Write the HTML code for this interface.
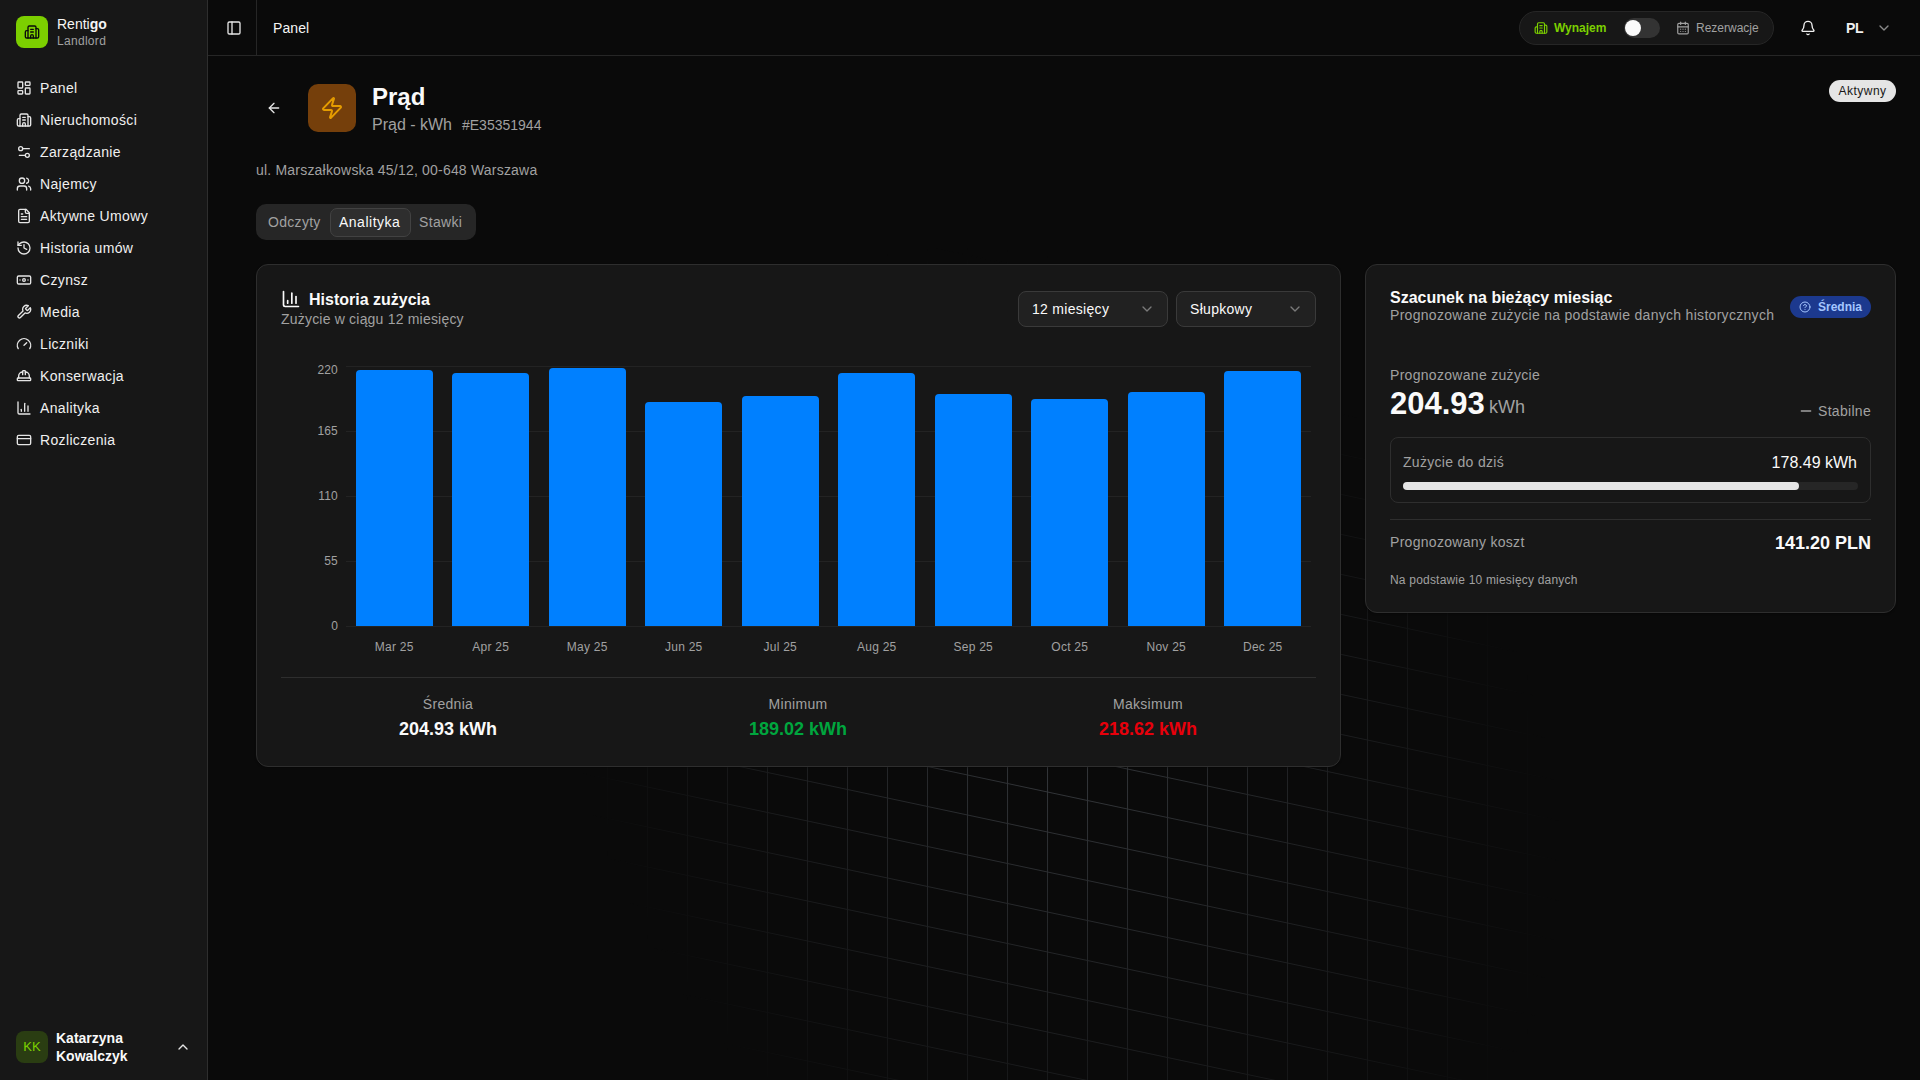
<!DOCTYPE html>
<html><head><meta charset="utf-8">
<style>
*{box-sizing:border-box;margin:0;padding:0}
html,body{width:1920px;height:1080px;overflow:hidden;background:#0a0a0a;font-family:"Liberation Sans",sans-serif;color:#fafafa}
.abs{position:absolute}
svg.i{position:absolute;fill:none;stroke:currentColor;stroke-width:2;stroke-linecap:round;stroke-linejoin:round}
.t{position:absolute;white-space:nowrap;line-height:1}
#sidebar{position:absolute;left:0;top:0;width:208px;height:1080px;background:#171717;border-right:1px solid #2e2e2e}
#header{position:absolute;left:208px;top:0;width:1712px;height:56px;border-bottom:1px solid #262626;background:#0a0a0a}
.nav{color:#f0f0f0;font-size:14px;letter-spacing:.35px}
.muted{color:#a1a1a1}
.card{position:absolute;background:#171717;border:1px solid #2e2e2e;border-radius:12px;box-shadow:0 1px 2px rgba(0,0,0,.3)}
</style></head><body>

<!-- grid background -->
<div id="grid" class="abs" style="left:208px;top:0;width:1712px;height:1080px;overflow:hidden">
<svg width="1712" height="2160" style="position:absolute;left:0;top:-324px;transform:skewY(12deg);-webkit-mask-image:radial-gradient(500px circle at center,#fff,transparent);mask-image:radial-gradient(500px circle at center,#fff,transparent)">
<defs><pattern id="gp" width="40" height="40" patternUnits="userSpaceOnUse" x="-1" y="-1"><path d="M.5 40V.5H40" fill="none" stroke="rgba(153,161,175,0.3)" stroke-width="1"/></pattern></defs>
<rect width="100%" height="100%" stroke-width="0" fill="url(#gp)"/>
</svg>
</div>

<div id="sidebar">
  <div class="abs" style="left:16px;top:16px;width:32px;height:32px;border-radius:8px;background:#7ccf00"></div>
  <svg class="i" style="left:24px;top:24px;color:#0a0a0a" width="16" height="16" viewBox="0 0 24 24"><path d="M10 12h4"/><path d="M10 8h4"/><path d="M14 21v-3a2 2 0 0 0-4 0v3"/><path d="M6 10H4a2 2 0 0 0-2 2v7a2 2 0 0 0 2 2h16a2 2 0 0 0 2-2V9a2 2 0 0 0-2-2h-2"/><path d="M6 21V5a2 2 0 0 1 2-2h8a2 2 0 0 1 2 2v16"/></svg>
  <div class="t" style="left:57px;top:17px;font-size:14px;color:#f5f5f5">Renti<b>go</b></div>
  <div class="t muted" style="left:57px;top:35px;font-size:12px;letter-spacing:.3px">Landlord</div>

    <svg class="i" style="left:16px;top:80px;color:#e5e5e5" width="16" height="16" viewBox="0 0 24 24"><rect width="7" height="9" x="3" y="3" rx="1"/><rect width="7" height="5" x="14" y="3" rx="1"/><rect width="7" height="9" x="14" y="12" rx="1"/><rect width="7" height="5" x="3" y="16" rx="1"/></svg>
  <div class="t nav" style="left:40px;top:81px">Panel</div>
  <svg class="i" style="left:16px;top:112px;color:#e5e5e5" width="16" height="16" viewBox="0 0 24 24"><path d="M10 12h4"/><path d="M10 8h4"/><path d="M14 21v-3a2 2 0 0 0-4 0v3"/><path d="M6 10H4a2 2 0 0 0-2 2v7a2 2 0 0 0 2 2h16a2 2 0 0 0 2-2V9a2 2 0 0 0-2-2h-2"/><path d="M6 21V5a2 2 0 0 1 2-2h8a2 2 0 0 1 2 2v16"/></svg>
  <div class="t nav" style="left:40px;top:113px">Nieruchomości</div>
  <svg class="i" style="left:16px;top:144px;color:#e5e5e5" width="16" height="16" viewBox="0 0 24 24"><path d="M20 7h-9"/><path d="M14 17H5"/><circle cx="17" cy="17" r="3"/><circle cx="7" cy="7" r="3"/></svg>
  <div class="t nav" style="left:40px;top:145px">Zarządzanie</div>
  <svg class="i" style="left:16px;top:176px;color:#e5e5e5" width="16" height="16" viewBox="0 0 24 24"><path d="M16 21v-2a4 4 0 0 0-4-4H6a4 4 0 0 0-4 4v2"/><circle cx="9" cy="7" r="4"/><path d="M22 21v-2a4 4 0 0 0-3-3.87"/><path d="M16 3.13a4 4 0 0 1 0 7.75"/></svg>
  <div class="t nav" style="left:40px;top:177px">Najemcy</div>
  <svg class="i" style="left:16px;top:208px;color:#e5e5e5" width="16" height="16" viewBox="0 0 24 24"><path d="M15 2H6a2 2 0 0 0-2 2v16a2 2 0 0 0 2 2h12a2 2 0 0 0 2-2V7Z"/><path d="M14 2v4a2 2 0 0 0 2 2h4"/><path d="M10 9H8"/><path d="M16 13H8"/><path d="M16 17H8"/></svg>
  <div class="t nav" style="left:40px;top:209px">Aktywne Umowy</div>
  <svg class="i" style="left:16px;top:240px;color:#e5e5e5" width="16" height="16" viewBox="0 0 24 24"><path d="M3 12a9 9 0 1 0 9-9 9.75 9.75 0 0 0-6.74 2.74L3 8"/><path d="M3 3v5h5"/><path d="M12 7v5l4 2"/></svg>
  <div class="t nav" style="left:40px;top:241px">Historia umów</div>
  <svg class="i" style="left:16px;top:272px;color:#e5e5e5" width="16" height="16" viewBox="0 0 24 24"><rect width="20" height="12" x="2" y="6" rx="2"/><circle cx="12" cy="12" r="2"/><path d="M6 12h.01M18 12h.01"/></svg>
  <div class="t nav" style="left:40px;top:273px">Czynsz</div>
  <svg class="i" style="left:16px;top:304px;color:#e5e5e5" width="16" height="16" viewBox="0 0 24 24"><path d="M14.7 6.3a1 1 0 0 0 0 1.4l1.6 1.6a1 1 0 0 0 1.4 0l3.77-3.77a6 6 0 0 1-7.94 7.94l-6.91 6.91a2.12 2.12 0 0 1-3-3l6.91-6.91a6 6 0 0 1 7.94-7.94l-3.76 3.76z"/></svg>
  <div class="t nav" style="left:40px;top:305px">Media</div>
  <svg class="i" style="left:16px;top:336px;color:#e5e5e5" width="16" height="16" viewBox="0 0 24 24"><path d="m12 14 4-4"/><path d="M3.34 19a10 10 0 1 1 17.32 0"/></svg>
  <div class="t nav" style="left:40px;top:337px">Liczniki</div>
  <svg class="i" style="left:16px;top:368px;color:#e5e5e5" width="16" height="16" viewBox="0 0 24 24"><path d="M2 18a1 1 0 0 0 1 1h18a1 1 0 0 0 1-1v-2a1 1 0 0 0-1-1H3a1 1 0 0 0-1 1v2z"/><path d="M10 10V5a1 1 0 0 1 1-1h2a1 1 0 0 1 1 1v5"/><path d="M4 15v-3a6 6 0 0 1 6-6"/><path d="M14 6a6 6 0 0 1 6 6v3"/></svg>
  <div class="t nav" style="left:40px;top:369px">Konserwacja</div>
  <svg class="i" style="left:16px;top:400px;color:#e5e5e5" width="16" height="16" viewBox="0 0 24 24"><path d="M3 3v16a2 2 0 0 0 2 2h16"/><path d="M18 17V9"/><path d="M13 17V5"/><path d="M8 17v-3"/></svg>
  <div class="t nav" style="left:40px;top:401px">Analityka</div>
  <svg class="i" style="left:16px;top:432px;color:#e5e5e5" width="16" height="16" viewBox="0 0 24 24"><rect width="20" height="14" x="2" y="5" rx="2"/><line x1="2" x2="22" y1="10" y2="10"/></svg>
  <div class="t nav" style="left:40px;top:433px">Rozliczenia</div>

  <div class="abs" style="left:16px;top:1031px;width:32px;height:32px;border-radius:8px;background:#2a3d12"></div>
  <div class="t" style="left:16px;top:1040px;width:32px;text-align:center;font-size:13px;color:#7ccf00">KK</div>
  <div class="t" style="left:56px;top:1031px;font-size:14px;font-weight:700;color:#fafafa">Katarzyna</div>
  <div class="t" style="left:56px;top:1049px;font-size:14px;font-weight:700;color:#fafafa">Kowalczyk</div>
  <svg class="i" style="left:175px;top:1039px;color:#e5e5e5" width="16" height="16" viewBox="0 0 24 24"><path d="m18 15-6-6-6 6"/></svg>
</div>

<div id="header">
  <svg class="i" style="left:18px;top:20px;color:#e5e5e5" width="16" height="16" viewBox="0 0 24 24"><rect width="18" height="18" x="3" y="3" rx="2"/><path d="M9 3v18"/></svg>
  <div class="abs" style="left:48px;top:0;width:1px;height:55px;background:#262626"></div>
  <div class="t" style="left:65px;top:21px;font-size:14px;color:#f5f5f5;letter-spacing:.1px">Panel</div>
  <div class="abs" style="left:1311px;top:11px;width:255px;height:34px;border-radius:17px;background:#171717;border:1px solid #262626"></div>
  <svg class="i" style="left:1326px;top:21px;color:#7ccf00" width="14" height="14" viewBox="0 0 24 24"><path d="M10 12h4"/><path d="M10 8h4"/><path d="M14 21v-3a2 2 0 0 0-4 0v3"/><path d="M6 10H4a2 2 0 0 0-2 2v7a2 2 0 0 0 2 2h16a2 2 0 0 0 2-2V9a2 2 0 0 0-2-2h-2"/><path d="M6 21V5a2 2 0 0 1 2-2h8a2 2 0 0 1 2 2v16"/></svg>
  <div class="t" style="left:1346px;top:22px;font-size:12px;font-weight:700;color:#7ccf00">Wynajem</div>
  <div class="abs" style="left:1416px;top:18px;width:36px;height:20px;border-radius:10px;background:#333333"></div>
  <div class="abs" style="left:1417px;top:20px;width:16px;height:16px;border-radius:8px;background:#fafafa"></div>
  <svg class="i" style="left:1468px;top:21px;color:#a1a1a1" width="14" height="14" viewBox="0 0 24 24"><rect width="18" height="18" x="3" y="4" rx="2"/><path d="M16 2v4"/><path d="M8 2v4"/><path d="M3 10h18"/><path d="M8 14h.01"/><path d="M12 14h.01"/><path d="M16 14h.01"/><path d="M8 18h.01"/><path d="M12 18h.01"/><path d="M16 18h.01"/></svg>
  <div class="t" style="left:1488px;top:22px;font-size:12px;color:#a1a1a1">Rezerwacje</div>
  <svg class="i" style="left:1592px;top:20px;color:#f0f0f0" width="16" height="16" viewBox="0 0 24 24"><path d="M10.268 21a2 2 0 0 0 3.464 0"/><path d="M3.262 15.326A1 1 0 0 0 4 17h16a1 1 0 0 0 .74-1.673C19.41 13.956 18 12.499 18 8A6 6 0 0 0 6 8c0 4.499-1.411 5.956-2.738 7.326"/></svg>
  <div class="t" style="left:1638px;top:21px;font-size:14px;font-weight:700;color:#f0f0f0;letter-spacing:-.3px">PL</div>
  <svg class="i" style="left:1668px;top:20px;color:#8a8a8a" width="16" height="16" viewBox="0 0 24 24"><path d="m6 9 6 6 6-6"/></svg>
</div>



<!-- page header -->
<svg class="i" style="left:266px;top:100px;color:#e5e5e5" width="16" height="16" viewBox="0 0 24 24"><path d="m12 19-7-7 7-7"/><path d="M19 12H5"/></svg>
<div class="abs" style="left:308px;top:84px;width:48px;height:48px;border-radius:10px;background:#753f0b"></div>
<svg class="i" style="left:320px;top:96px;color:#e59c00" width="24" height="24" viewBox="0 0 24 24"><path d="M4 14a1 1 0 0 1-.78-1.63l9.9-10.2a.5.5 0 0 1 .86.46l-1.92 6.02A1 1 0 0 0 13 10h7a1 1 0 0 1 .78 1.63l-9.9 10.2a.5.5 0 0 1-.86-.46l1.92-6.02A1 1 0 0 0 11 14z"/></svg>
<div class="t" style="left:372px;top:85px;font-size:24px;font-weight:700;color:#fafafa">Prąd</div>
<div class="t muted" style="left:372px;top:117px;font-size:16px">Prąd - kWh</div>
<div class="t muted" style="left:462px;top:118px;font-size:14px">#E35351944</div>
<div class="abs" style="left:1829px;top:80px;width:67px;height:22px;border-radius:11px;background:#e5e5e5"></div>
<div class="t" style="left:1829px;top:85px;width:67px;text-align:center;font-size:12px;font-weight:400;letter-spacing:.5px;color:#171717">Aktywny</div>
<div class="t muted" style="left:256px;top:163px;font-size:14px;letter-spacing:.2px">ul. Marszałkowska 45/12, 00-648 Warszawa</div>

<!-- tabs -->
<div class="abs" style="left:256px;top:204px;width:220px;height:36px;border-radius:10px;background:#262626"></div>
<div class="abs" style="left:330px;top:208px;width:81px;height:29px;border-radius:7px;background:#2e2e2e;border:1px solid #424242"></div>
<div class="t muted" style="left:268px;top:215px;font-size:14px;letter-spacing:.3px">Odczyty</div>
<div class="t" style="left:339px;top:215px;font-size:14px;letter-spacing:.5px;color:#fafafa">Analityka</div>
<div class="t muted" style="left:419px;top:215px;font-size:14px;letter-spacing:.35px">Stawki</div>

<!-- chart card -->
<div class="card" style="left:256px;top:264px;width:1085px;height:503px"></div>
<svg class="i" style="left:281px;top:289px;color:#fafafa" width="20" height="20" viewBox="0 0 24 24"><path d="M3 3v16a2 2 0 0 0 2 2h16"/><path d="M18 17V9"/><path d="M13 17V5"/><path d="M8 17v-3"/></svg>
<div class="t" style="left:309px;top:292px;font-size:16px;font-weight:700;color:#fafafa">Historia zużycia</div>
<div class="t muted" style="left:281px;top:312px;font-size:14px;letter-spacing:.2px">Zużycie w ciągu 12 miesięcy</div>
<div class="abs" style="left:1018px;top:291px;width:150px;height:36px;border-radius:8px;background:#212121;border:1px solid #3a3a3a"></div>
<div class="t" style="left:1032px;top:302px;font-size:14px;color:#fafafa;letter-spacing:.3px">12 miesięcy</div>
<svg class="i" style="left:1139px;top:301px;color:#7a7a7a" width="16" height="16" viewBox="0 0 24 24"><path d="m6 9 6 6 6-6"/></svg>
<div class="abs" style="left:1176px;top:291px;width:140px;height:36px;border-radius:8px;background:#212121;border:1px solid #3a3a3a"></div>
<div class="t" style="left:1190px;top:302px;font-size:14px;color:#fafafa;letter-spacing:.3px">Słupkowy</div>
<svg class="i" style="left:1287px;top:301px;color:#7a7a7a" width="16" height="16" viewBox="0 0 24 24"><path d="m6 9 6 6 6-6"/></svg>
<div class="abs" style="left:346px;top:366px;width:965px;height:1px;background:#232323"></div>
<div class="t muted" style="left:288px;top:364px;width:50px;text-align:right;font-size:12px;letter-spacing:.2px">220</div>
<div class="abs" style="left:346px;top:431px;width:965px;height:1px;background:#232323"></div>
<div class="t muted" style="left:288px;top:425px;width:50px;text-align:right;font-size:12px;letter-spacing:.2px">165</div>
<div class="abs" style="left:346px;top:496px;width:965px;height:1px;background:#232323"></div>
<div class="t muted" style="left:288px;top:490px;width:50px;text-align:right;font-size:12px;letter-spacing:.2px">110</div>
<div class="abs" style="left:346px;top:561px;width:965px;height:1px;background:#232323"></div>
<div class="t muted" style="left:288px;top:555px;width:50px;text-align:right;font-size:12px;letter-spacing:.2px">55</div>
<div class="abs" style="left:346px;top:626px;width:965px;height:1px;background:#232323"></div>
<div class="t muted" style="left:288px;top:620px;width:50px;text-align:right;font-size:12px;letter-spacing:.2px">0</div>
<div class="abs" style="left:355.65px;top:370.10px;width:77.2px;height:255.90px;border-radius:4px 4px 0 0;background:#0080ff"></div>
<div class="t muted" style="left:335.65px;top:641px;width:117.2px;text-align:center;font-size:12px;letter-spacing:.25px">Mar 25</div>
<div class="abs" style="left:452.15px;top:372.70px;width:77.2px;height:253.30px;border-radius:4px 4px 0 0;background:#0080ff"></div>
<div class="t muted" style="left:432.15px;top:641px;width:117.2px;text-align:center;font-size:12px;letter-spacing:.25px">Apr 25</div>
<div class="abs" style="left:548.65px;top:367.50px;width:77.2px;height:258.50px;border-radius:4px 4px 0 0;background:#0080ff"></div>
<div class="t muted" style="left:528.65px;top:641px;width:117.2px;text-align:center;font-size:12px;letter-spacing:.25px">May 25</div>
<div class="abs" style="left:645.15px;top:402.10px;width:77.2px;height:223.90px;border-radius:4px 4px 0 0;background:#0080ff"></div>
<div class="t muted" style="left:625.15px;top:641px;width:117.2px;text-align:center;font-size:12px;letter-spacing:.25px">Jun 25</div>
<div class="abs" style="left:741.65px;top:395.60px;width:77.2px;height:230.40px;border-radius:4px 4px 0 0;background:#0080ff"></div>
<div class="t muted" style="left:721.65px;top:641px;width:117.2px;text-align:center;font-size:12px;letter-spacing:.25px">Jul 25</div>
<div class="abs" style="left:838.15px;top:373.20px;width:77.2px;height:252.80px;border-radius:4px 4px 0 0;background:#0080ff"></div>
<div class="t muted" style="left:818.15px;top:641px;width:117.2px;text-align:center;font-size:12px;letter-spacing:.25px">Aug 25</div>
<div class="abs" style="left:934.65px;top:394.30px;width:77.2px;height:231.70px;border-radius:4px 4px 0 0;background:#0080ff"></div>
<div class="t muted" style="left:914.65px;top:641px;width:117.2px;text-align:center;font-size:12px;letter-spacing:.25px">Sep 25</div>
<div class="abs" style="left:1031.15px;top:398.75px;width:77.2px;height:227.25px;border-radius:4px 4px 0 0;background:#0080ff"></div>
<div class="t muted" style="left:1011.15px;top:641px;width:117.2px;text-align:center;font-size:12px;letter-spacing:.25px">Oct 25</div>
<div class="abs" style="left:1127.65px;top:391.50px;width:77.2px;height:234.50px;border-radius:4px 4px 0 0;background:#0080ff"></div>
<div class="t muted" style="left:1107.65px;top:641px;width:117.2px;text-align:center;font-size:12px;letter-spacing:.25px">Nov 25</div>
<div class="abs" style="left:1224.15px;top:370.60px;width:77.2px;height:255.40px;border-radius:4px 4px 0 0;background:#0080ff"></div>
<div class="t muted" style="left:1204.15px;top:641px;width:117.2px;text-align:center;font-size:12px;letter-spacing:.25px">Dec 25</div>
<div class="abs" style="left:281px;top:677px;width:1035px;height:1px;background:#2e2e2e"></div>
<div class="t muted" style="left:281px;top:697px;width:334px;text-align:center;font-size:14px;letter-spacing:.3px">Średnia</div>
<div class="t" style="left:281px;top:720px;width:334px;text-align:center;font-size:18px;font-weight:700;color:#fafafa">204.93 kWh</div>
<div class="t muted" style="left:631px;top:697px;width:334px;text-align:center;font-size:14px;letter-spacing:.3px">Minimum</div>
<div class="t" style="left:631px;top:720px;width:334px;text-align:center;font-size:18px;font-weight:700;color:#00a63e">189.02 kWh</div>
<div class="t muted" style="left:981px;top:697px;width:334px;text-align:center;font-size:14px;letter-spacing:.3px">Maksimum</div>
<div class="t" style="left:981px;top:720px;width:334px;text-align:center;font-size:18px;font-weight:700;color:#e7000b">218.62 kWh</div>

<!-- estimate card -->
<div class="card" style="left:1365px;top:264px;width:531px;height:349px"></div>
<div class="t" style="left:1390px;top:290px;font-size:16px;font-weight:700;color:#fafafa">Szacunek na bieżący miesiąc</div>
<div class="t muted" style="left:1390px;top:308px;font-size:14px;letter-spacing:.3px">Prognozowane zużycie na podstawie danych historycznych</div>
<div class="abs" style="left:1790px;top:296px;width:81px;height:22px;border-radius:11px;background:#1c398e"></div>
<svg class="i" style="left:1799px;top:301px;color:#a4c6ff" width="12" height="12" viewBox="0 0 24 24"><circle cx="12" cy="12" r="10"/><path d="M9.09 9a3 3 0 0 1 5.83 1c0 2-3 3-3 3"/><path d="M12 17h.01"/></svg>
<div class="t" style="left:1818px;top:301px;font-size:12px;font-weight:700;color:#a4c6ff">Średnia</div>
<div class="t muted" style="left:1390px;top:368px;font-size:14px;letter-spacing:.3px">Prognozowane zużycie</div>
<div class="t" style="left:1390px;top:388px;font-size:31px;font-weight:700;color:#fafafa;letter-spacing:0px">204.93</div>
<div class="t muted" style="left:1489px;top:398px;font-size:18px">kWh</div>
<svg class="i" style="left:1798px;top:403px;color:#a1a1a1" width="16" height="16" viewBox="0 0 24 24"><path d="M5 12h14"/></svg>
<div class="t muted" style="left:1818px;top:404px;font-size:14px;letter-spacing:.3px">Stabilne</div>
<div class="abs" style="left:1390px;top:437px;width:481px;height:66px;border-radius:8px;background:#171717;border:1px solid #2e2e2e"></div>
<div class="t muted" style="left:1403px;top:455px;font-size:14px;letter-spacing:.3px">Zużycie do dziś</div>
<div class="t" style="left:1657px;top:455px;width:200px;text-align:right;font-size:16px;color:#fafafa">178.49 kWh</div>
<div class="abs" style="left:1403px;top:482px;width:455px;height:8px;border-radius:4px;background:#262626"></div>
<div class="abs" style="left:1403px;top:482px;width:396px;height:8px;border-radius:4px;background:#e5e5e5"></div>
<div class="abs" style="left:1390px;top:519px;width:481px;height:1px;background:#2e2e2e"></div>
<div class="t muted" style="left:1390px;top:535px;font-size:14px;letter-spacing:.3px">Prognozowany koszt</div>
<div class="t" style="left:1671px;top:534px;width:200px;text-align:right;font-size:18px;font-weight:700;color:#fafafa">141.20 PLN</div>
<div class="t muted" style="left:1390px;top:574px;font-size:12px;letter-spacing:.2px">Na podstawie 10 miesięcy danych</div>

</body></html>
